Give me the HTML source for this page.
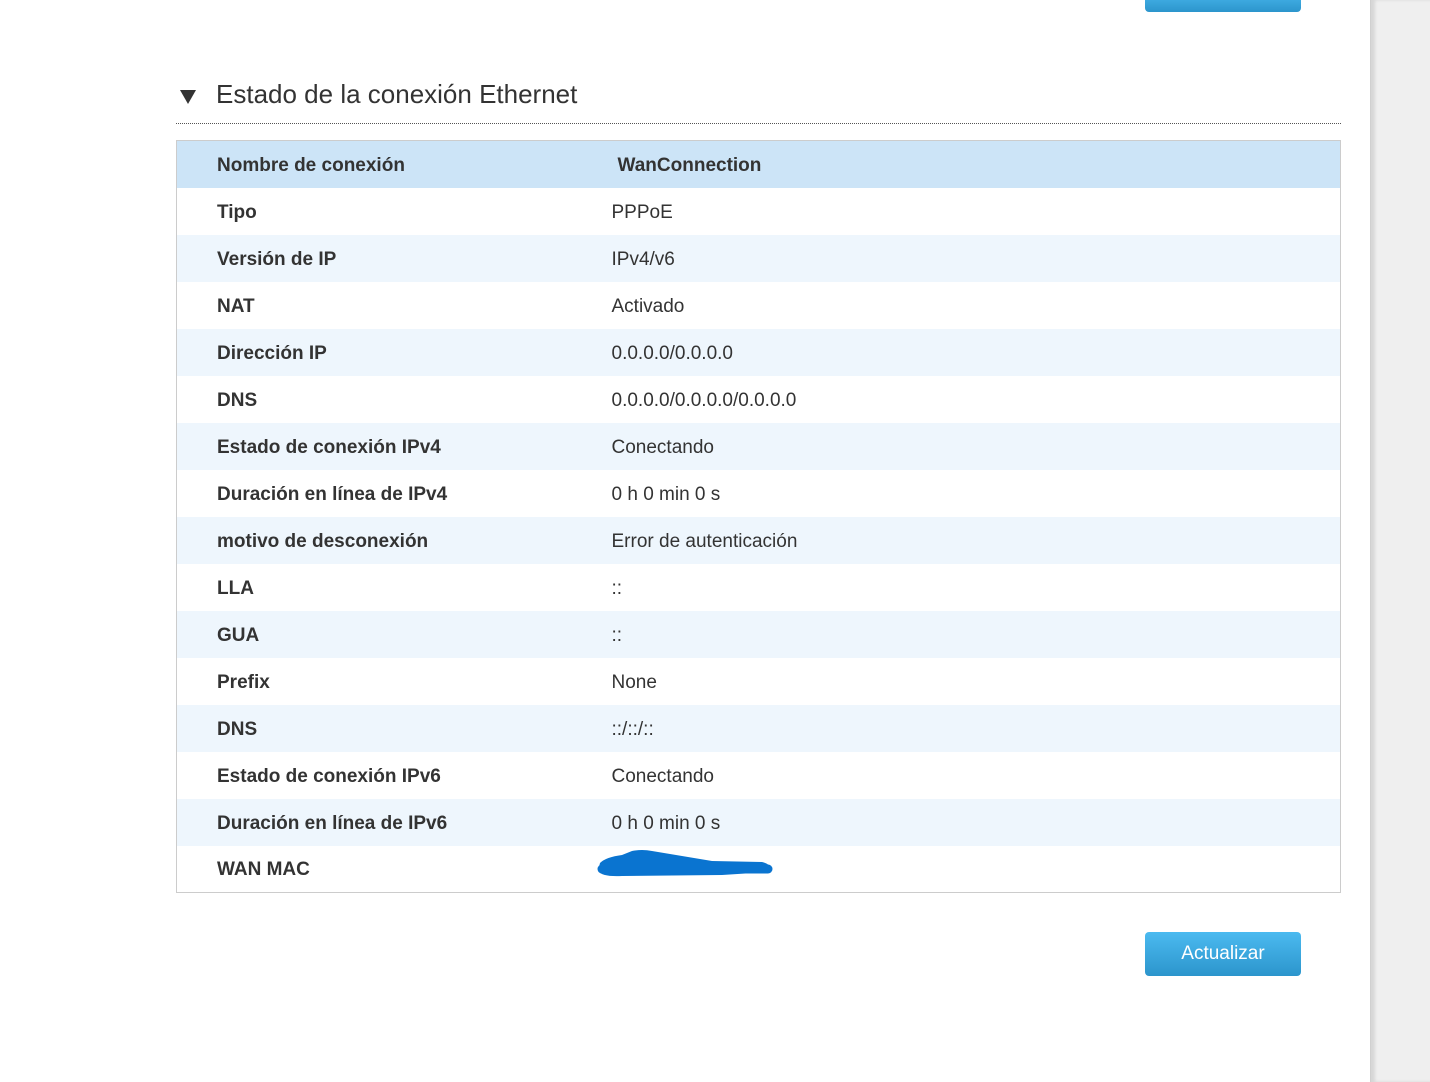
<!DOCTYPE html>
<html><head><meta charset="utf-8">
<style>
html,body{margin:0;padding:0;width:1430px;height:1082px;overflow:hidden;background:#fff;font-family:"Liberation Sans",sans-serif;color:#333;}
.side{position:absolute;left:1370px;top:0;width:60px;height:1082px;background:#efefef;border-left:1px solid #d0d0d0;box-shadow:inset 4px 0 3px rgba(0,0,0,0.10);}
.btn{position:absolute;background:linear-gradient(#4bbaf0,#2c95cc);border-radius:4px;color:#fff;font-size:19px;text-align:center;}
.title{position:absolute;left:216px;top:79px;font-size:26px;color:#333;}
.tri{position:absolute;left:180px;top:90px;width:0;height:0;border-left:8px solid transparent;border-right:8px solid transparent;border-top:14px solid #333;}
.rule{position:absolute;left:176px;top:123px;width:1165px;border-top:1px dotted #555;}
table{position:absolute;left:176px;top:140px;width:1165px;border-collapse:collapse;border:1px solid #ccc;table-layout:fixed;}
td{height:47px;padding:3px 0 0 0;box-sizing:border-box;font-size:19px;vertical-align:middle;}
td.l{padding-left:40px;font-weight:bold;width:435px;}
tr:nth-child(odd) td{background:#eef6fd;}
tr.h td{background:#cce4f7;font-weight:bold;}
</style></head><body>
<div class="btn" style="left:1145px;top:-10px;width:156px;height:22px;"></div>
<div class="side"></div>
<div class="tri"></div>
<div class="title">Estado de la conexión Ethernet</div>
<div class="rule"></div>
<table>
<tr class="h"><td class="l">Nombre de conexión</td><td style="padding-left:6px">WanConnection</td></tr>
<tr><td class="l">Tipo</td><td>PPPoE</td></tr>
<tr><td class="l">Versión de IP</td><td>IPv4/v6</td></tr>
<tr><td class="l">NAT</td><td>Activado</td></tr>
<tr><td class="l">Dirección IP</td><td>0.0.0.0/0.0.0.0</td></tr>
<tr><td class="l">DNS</td><td>0.0.0.0/0.0.0.0/0.0.0.0</td></tr>
<tr><td class="l">Estado de conexión IPv4</td><td>Conectando</td></tr>
<tr><td class="l">Duración en línea de IPv4</td><td>0 h 0 min 0 s</td></tr>
<tr><td class="l">motivo de desconexión</td><td>Error de autenticación</td></tr>
<tr><td class="l">LLA</td><td>::</td></tr>
<tr><td class="l">GUA</td><td>::</td></tr>
<tr><td class="l">Prefix</td><td>None</td></tr>
<tr><td class="l">DNS</td><td>::/::/::</td></tr>
<tr><td class="l">Estado de conexión IPv6</td><td>Conectando</td></tr>
<tr><td class="l">Duración en línea de IPv6</td><td>0 h 0 min 0 s</td></tr>
<tr><td class="l">WAN MAC</td><td></td></tr>
</table>
<svg style="position:absolute;left:592px;top:845px" width="190" height="40">
<path d="M8 18 Q14 12 30 10 L40 6 Q50 4 60 6 L120 16 L170 17 Q182 20 176 27 L130 30 L30 31 Q10 32 6 26 Z" fill="#0a74d0"/>
<path d="M10 24 L176 24" stroke="#0a74d0" stroke-width="9" stroke-linecap="round"/>
</svg>
<div class="btn" style="left:1145px;top:932px;width:156px;height:44px;line-height:44px;">Actualizar</div>
</body></html>
